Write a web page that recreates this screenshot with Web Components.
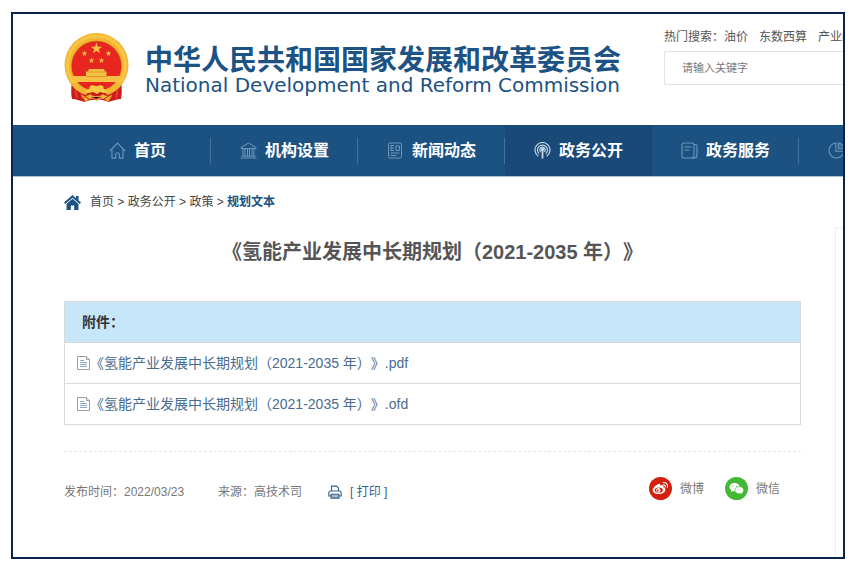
<!DOCTYPE html>
<html lang="zh-CN">
<head>
<meta charset="utf-8">
<meta name="viewport" content="width=device-width, initial-scale=1">
<title>《氢能产业发展中长期规划（2021-2035 年）》</title>
<style>
    body {
        margin: 0;
        background: #fff;
        color: #666;
        font: 12px/20px "Liberation Sans", "Noto Sans CJK SC", sans-serif;
        text-spacing-trim: space-all;
    }
</style>
</head>
<body>
<page-frame>
    <site-header></site-header>
    <site-nav>
        <nav-item icon="home">首页</nav-item>
        <nav-item icon="bank">机构设置</nav-item>
        <nav-item icon="news">新闻动态</nav-item>
        <nav-item icon="signal" active>政务公开</nav-item>
        <nav-item icon="doc">政务服务</nav-item>
        <nav-item icon="pie" label="互动交流"></nav-item>
    </site-nav>
    <article-layout>
        <bread-crumb slot="path"></bread-crumb>
        <h1 slot="title">《氢能产业发展中长期规划（2021-2035 年）》</h1>
        <attachment-list>
            <span slot="heading">附件：</span>
            <attachment-item href="#pdf">《氢能产业发展中长期规划（2021-2035 年）》.pdf</attachment-item>
            <attachment-item href="#ofd">《氢能产业发展中长期规划（2021-2035 年）》.ofd</attachment-item>
        </attachment-list>
        <article-meta></article-meta>
    </article-layout>
</page-frame>

<script>
const ICONS = {
    home: `<svg viewBox="0 0 17 17" fill="none" stroke="currentColor" stroke-width="1.1"><path d="M.7 9.2 8.5 1l7.8 8.2M3 7.5v8.6h3.7v-3.6a1.8 1.8 0 0 1 3.6 0v3.6H14V7.5"/></svg>`,
    bank: `<svg viewBox="0 0 17 17" fill="none" stroke="currentColor" stroke-width="1"><path d="M1 5.5 8.5 1 16 5.5v1H1zM.5 16h16M1.5 14.2h14M3 7v7M5 7v7M7.5 7v7M9.5 7v7M12 7v7M14 7v7"/></svg>`,
    news: `<svg viewBox="0 0 17 17" fill="none" stroke="currentColor" stroke-width="1"><rect x="1.500" y="1" width="13" height="15" rx="1.5"/><path d="M3.500 3.500h3.500M3.500 6h3.500M3.500 8.500h3.500M3.500 11h9M3.500 13.500h6M9 4h3.500v4.500H9zM4 3.500v5"/></svg>`,
    signal: `<svg viewBox="0 0 17 17" fill="none" stroke="currentColor" stroke-width="1.2"><path d="M4.300 14.200a7.500 7.500 0 1 1 8.400 0M5.200 11.800a5 5 0 1 1 6.600 0M6.700 9.800a2.700 2.700 0 1 1 3.600 0"/><path d="M8.500 7v9.500" stroke-width="1.800"/><circle cx="8.500" cy="7.500" r="1.200" fill="currentColor"/></svg>`,
    doc: `<svg viewBox="0 0 17 17" fill="none" stroke="currentColor" stroke-width="1.1"><rect x="1" y="1" width="12" height="15" rx="2"/><path d="M3.5 5h7M3.5 8h5M13 2.5h1.2A1.8 1.8 0 0 1 16 4.3V13a3 3 0 0 1-3 3h-2"/></svg>`,
    pie: `<svg viewBox="0 0 17 17" fill="none" stroke="currentColor" stroke-width="1.1"><path d="M7.8 1A7.5 7.5 0 1 0 16 9.2H7.8z"/><path d="M10.3 1v5.8h6A6 6 0 0 0 10.3 1z" fill="currentColor" fill-opacity=".4"/></svg>`,
    house: `<svg viewBox="0 0 16 14" fill="currentColor"><path d="M8 0 0 7l1.200 1.500L8 2.600l6.800 5.900L16 7l-2.300-2V.8h-2.400v2.100z"/><path d="M8 3.400 2.400 8.300V14h4V9.800h3.200V14h4V8.300z"/></svg>`,
    file: `<svg viewBox="0 0 13 14" fill="none"><path d="M.5.500h9l3 3v10H.5z" fill="#fff" stroke="#9a9ea4"/><path d="M9.500.500v3h3" fill="#e3e6ea" stroke="#9a9ea4"/><path d="M3 4.500h4M3 6.500h7M3 8.500h7M3 10.500h7" stroke="#8aa6c4"/></svg>`,
    printer: `<svg viewBox="0 0 14 14" fill="none" stroke="currentColor" stroke-width="1.1"><path d="M3.5 6V1.1h5L10.5 3v3M3 11H.8V7.4L2 6h10l1.2 1.4V11H11"/><path d="M3 9.2h8v3.9H3z" fill="currentColor" fill-opacity=".45"/></svg>`,
    weibo: `<svg viewBox="0 0 24 24"><circle cx="12" cy="12" r="12" fill="#d3200f"/><path d="M10.2 7.2c1.2-.3 1.9.4 1.6 1.8 2-.7 3.8-.3 3.3 1.6 1.3.3 2 1.2 2 2.4 0 2.8-3.2 4.8-6.8 4.8-3.5 0-6.4-1.6-6.4-4.2 0-2.3 3.5-5.8 6.3-6.4z" fill="#fff"/><ellipse cx="10.200" cy="13.600" rx="4.300" ry="2.700" fill="#d3200f"/><circle cx="9.700" cy="13.700" r="2.200" fill="#fff"/><circle cx="9.200" cy="14" r="1" fill="#d3200f"/><path d="M14.8 8.2c1.6-.3 2.5.8 2.1 2.2M14.7 5.8c3.1-.6 5.4 2.1 4.4 5" fill="none" stroke="#fff" stroke-width="1.1" stroke-linecap="round"/></svg>`,
    wechat: `<svg viewBox="0 0 24 24"><circle cx="12" cy="12" r="12" fill="#43b834"/><path d="M10 6.2c-3 0-5.3 1.9-5.3 4.3 0 1.4.8 2.6 2 3.4l-.5 1.7 2-1c.6.2 1.2.2 1.8.2 2.9 0 5.3-1.9 5.3-4.3S12.900 6.200 10 6.200z" fill="#fff"/><path d="M14.900 10c-2.600 0-4.600 1.700-4.600 3.800s2 3.800 4.600 3.800l1.500-.2 1.700.9-.4-1.500c1.100-.7 1.800-1.800 1.800-3 0-2.100-2-3.800-4.600-3.800z" fill="#fff" stroke="#43b834" stroke-width=".7"/><g fill="#43b834"><circle cx="8.200" cy="9.400" r=".6"/><circle cx="11.800" cy="9.400" r=".6"/><circle cx="13.400" cy="13" r=".5"/><circle cx="16.400" cy="13" r=".5"/></g></svg>`,
    emblem: `<svg viewBox="0 0 65 69">
        <defs><polygon id="star" points="0,-1 .24,-.31 .95,-.31 .38,.12 .59,.81 0,.38 -.59,.81 -.38,.12 -.95,-.31 -.24,-.31"/></defs>
        <path d="M8 48C7 55 7 62 8 66c5 0 8 2 13 3 3-3 20-3 23 0 5-1 8-3 13-3 1-5 1-11 0-18z" fill="#c91b1b"/>
        <path d="M12 50c-1 6 0 11 1 15M18 54c-1 5-1 8 1 12M53 50c1 6 0 11-1 15M47 54c1 5 1 8-1 12" stroke="#ec3a2d" stroke-width="2" fill="none"/>
        <circle cx="32.500" cy="32" r="32" fill="#f2b630"/>
        <circle cx="32.500" cy="32" r="29" fill="none" stroke="#f8c544" stroke-width="3"/>
        <circle cx="32.500" cy="33" r="25.500" fill="#d58e22"/>
        <circle cx="32.500" cy="33" r="24.800" fill="#e7271f"/>
        <g fill="#f5c044">
            <use href="#star" transform="translate(32.500 15.500) scale(6)"/>
            <use href="#star" transform="translate(20.500 20.500) scale(3)"/>
            <use href="#star" transform="translate(44.500 20.500) scale(3)"/>
            <use href="#star" transform="translate(27.500 27.500) scale(3)"/>
            <use href="#star" transform="translate(37.500 27.500) scale(3)"/>
            <path d="M25 36h15l1 2.500h1.500V43H57l-2 6H10l-2-6h14v-4.500h2z"/>
        </g>
        <path d="M24 39h17M22 43.500h21" stroke="#dc8b20" stroke-width=".8"/>
        <path d="M11 50c4 3 8 5 14 7l-3 4C15 59 9 55 7 50zm43 0c-4 3-8 5-14 7l3 4c7-2 13-6 15-11z" fill="#f2b630"/>
        <path d="M15 51l10 1-3 3zM50 51l-10 1 3 3z" fill="#e7271f"/>
        <path d="M22 61c5-4 16-4 21 0l-4 4H26z" fill="#c91b1b"/>
        <path d="M26 53l3-1 2 1h3l2-1 3 1 1 3 5 3-5 1-4-1-3 2-4-2-4 1-5-1 5-3z" fill="#f9c845"/>
        <path d="M17 62c4 2 7 1 9-1 3 3 10 3 13 0 2 2 5 3 9 1l-4 7c-2-3-5-4-8-3l-3 2-3-2c-4-1-6 0-8 3z" fill="#efb22e"/>
        <path d="M20 63l5 3M45 63l-5 3M28 64l4 2 5-2" stroke="#cc281e" stroke-width="1"/>
    </svg>`
};

class UiIcon extends HTMLElement {
    constructor() {
        super();
        this.attachShadow({ mode: 'open' });
        this.shadowRoot.innerHTML = `
            <style>
                :host { display: block; flex: none; width: 17px; height: 17px; }
                svg { display: block; width: 100%; height: 100%; }
            </style>
            ${ICONS[this.getAttribute('name')] || ''}
        `;
    }
}

class PageFrame extends HTMLElement {
    constructor() {
        super();
        this.attachShadow({ mode: 'open' });
        this.shadowRoot.innerHTML = `
            <style>
                :host {
                    display: flex;
                    flex-direction: column;
                    box-sizing: border-box;
                    min-height: calc(100vh - 18px);
                    margin: 12px 12px 6px 11px;
                    border: 2px solid #0a2250;
                    overflow: hidden;
                }
            </style>
            <slot></slot>
        `;
    }
}

class SiteHeader extends HTMLElement {
    constructor() {
        super();
        this.attachShadow({ mode: 'open' });
        this.shadowRoot.innerHTML = `
            <style>
                :host {
                    display: flex;
                    justify-content: space-between;
                    padding: 13px 0 23px 51px;
                }
                .logo {
                    display: flex;
                    gap: 16px;
                    padding-top: 6px;
                    color: #1c5284;
                    text-decoration: none;
                    white-space: nowrap;
                }
                .logo ui-icon { width: 65px; height: 69px; }
                .names { display: flex; flex-direction: column; padding-top: 14px; }
                .names b { font-size: 28px; line-height: 28px; }
                .names span { font: 20px/20px "DejaVu Sans", sans-serif; }
                .search { width: 179px; }
                .hot { display: flex; gap: 11px; white-space: nowrap; color: #555; }
                .hot a { color: inherit; text-decoration: none; }
                input {
                    box-sizing: border-box;
                    width: 100%;
                    height: 34px;
                    margin: 4px 0 0;
                    padding: 0 0 0 17px;
                    border: 1px solid #e2e2e2;
                    border-right: 0;
                    border-radius: 3px 0 0 3px;
                    font: inherit;
                    font-size: 11px;
                    outline: 0;
                }
                input::placeholder { color: #777; }
            </style>
            <a class="logo" href="#">
                <ui-icon name="emblem"></ui-icon>
                <div class="names">
                    <b>中华人民共和国国家发展和改革委员会</b>
                    <span>National Development and Reform Commission</span>
                </div>
            </a>
            <form class="search">
                <div class="hot">
                    <span>热门搜索：<a href="#">油价</a></span>
                    <a href="#">东数西算</a>
                    <a href="#">产业结构</a>
                </div>
                <input type="search" aria-label="搜索" placeholder="请输入关键字">
            </form>
        `;
    }
}

class SiteNav extends HTMLElement {
    constructor() {
        super();
        this.attachShadow({ mode: 'open' });
        this.shadowRoot.innerHTML = `
            <style>
                :host {
                    display: block;
                    background: #1b5282;
                    border-bottom: 1px solid #a9c2d8;
                }
                nav { display: flex; padding-left: 51px; }
            </style>
            <nav><slot></slot></nav>
        `;
    }
}

class NavItem extends HTMLElement {
    constructor() {
        super();
        this.attachShadow({ mode: 'open' });
        const label = this.getAttribute('label');
        this.shadowRoot.innerHTML = `
            <style>
                :host {
                    display: block;
                    flex: 0 0 147px;
                    background: linear-gradient(#40739d, #40739d) right center / 1px 26px no-repeat;
                }
                :host([active]) { background: #184977; }
                a {
                    display: flex;
                    align-items: center;
                    gap: 8px;
                    height: 51px;
                    padding: 0 29px;
                    color: #fff;
                    font-size: 16px;
                    font-weight: bold;
                    text-decoration: none;
                    white-space: nowrap;
                }
                :host(:first-child) a { justify-content: center; }
                ui-icon { color: #6e97ba; }
                :host([active]) ui-icon { color: #c3d5e5; }
            </style>
            <a href="#" ${label ? `aria-label="${label}"` : ''}>
                <ui-icon name="${this.getAttribute('icon')}"></ui-icon>
                <slot></slot>
            </a>
        `;
    }
}

class ArticleLayout extends HTMLElement {
    constructor() {
        super();
        this.attachShadow({ mode: 'open' });
        this.shadowRoot.innerHTML = `
            <style>
                :host {
                    display: grid;
                    flex: 1;
                    grid-template-columns: minmax(0, 1fr) 8px;
                    grid-template-rows: auto 1fr;
                    column-gap: 34px;
                    padding: 15px 0 0 51px;
                }
                .path { grid-column: 1 / 3; padding-bottom: 15px; }
                ::slotted(h1) {
                    margin: 9px 0 33px;
                    color: #555;
                    font-size: 20px;
                    line-height: 32px;
                    text-align: center;
                }
                aside {
                    border: 1px solid #eee;
                    border-width: 1px 0 0 1px;
                }
            </style>
            <div class="path"><slot name="path"></slot></div>
            <main>
                <slot name="title"></slot>
                <slot></slot>
            </main>
            <aside></aside>
        `;
    }
}

class BreadCrumb extends HTMLElement {
    constructor() {
        super();
        this.attachShadow({ mode: 'open' });
        this.shadowRoot.innerHTML = `
            <style>
                :host { display: flex; align-items: center; gap: 9px; color: #444; }
                ui-icon { width: 17px; height: 15px; color: #1b5282; }
                a { color: inherit; text-decoration: none; }
                b { color: #1b5282; }
            </style>
            <ui-icon name="house"></ui-icon>
            <nav><a href="#">首页</a> &gt; <a href="#">政务公开</a> &gt; <a href="#">政策</a> &gt; <b>规划文本</b></nav>
        `;
    }
}

class AttachmentList extends HTMLElement {
    constructor() {
        super();
        this.attachShadow({ mode: 'open' });
        this.shadowRoot.innerHTML = `
            <style>
                :host {
                    display: block;
                    border: 1px solid #d9d9d9;
                    font-size: 14px;
                }
                h2 {
                    margin: 0;
                    padding: 0 17px;
                    background: #c7e6fa;
                    color: #333;
                    font-size: 14px;
                    line-height: 40px;
                }
            </style>
            <h2><slot name="heading"></slot></h2>
            <div role="list"><slot></slot></div>
        `;
    }
}

class AttachmentItem extends HTMLElement {
    constructor() {
        super();
        this.attachShadow({ mode: 'open' });
        this.setAttribute('role', 'listitem');
        this.shadowRoot.innerHTML = `
            <style>
                :host { display: block; border-top: 1px solid #d9d9d9; }
                a {
                    display: flex;
                    align-items: center;
                    padding: 0 12px;
                    color: #486b90;
                    line-height: 40px;
                    text-decoration: none;
                }
                ui-icon { width: 13px; height: 14px; }
            </style>
            <a href="${this.getAttribute('href')}"><ui-icon name="file"></ui-icon><slot></slot></a>
        `;
    }
}

class ArticleMeta extends HTMLElement {
    constructor() {
        super();
        this.attachShadow({ mode: 'open' });
        this.shadowRoot.innerHTML = `
            <style>
                :host {
                    display: flex;
                    justify-content: space-between;
                    margin-top: 26px;
                    padding: 25px 21px 0 0;
                    border-top: 1px dashed #e6e6e6;
                    color: #777;
                    white-space: nowrap;
                }
                .info, .share, button, .share a { display: flex; align-items: center; }
                .info { gap: 34px; padding-top: 5px; }
                .source { display: flex; gap: 26px; }
                button {
                    gap: 8px;
                    padding: 0;
                    border: 0;
                    background: none;
                    color: #35618c;
                    font: inherit;
                }
                button ui-icon { width: 14px; height: 14px; }
                .share { gap: 21px; align-self: flex-start; }
                .share a { gap: 8px; color: inherit; text-decoration: none; }
                .share ui-icon { width: 23px; height: 23px; }
            </style>
            <div class="info">
                <span>发布时间：2022/03/23</span>
                <div class="source">
                    <span>来源：高技术司</span>
                    <button type="button"><ui-icon name="printer"></ui-icon>[ 打印 ]</button>
                </div>
            </div>
            <div class="share">
                <a href="#"><ui-icon name="weibo"></ui-icon>微博</a>
                <a href="#"><ui-icon name="wechat"></ui-icon>微信</a>
            </div>
        `;
    }
}

customElements.define('ui-icon', UiIcon);
customElements.define('page-frame', PageFrame);
customElements.define('site-header', SiteHeader);
customElements.define('site-nav', SiteNav);
customElements.define('nav-item', NavItem);
customElements.define('article-layout', ArticleLayout);
customElements.define('bread-crumb', BreadCrumb);
customElements.define('attachment-list', AttachmentList);
customElements.define('attachment-item', AttachmentItem);
customElements.define('article-meta', ArticleMeta);
</script>
</body>
</html>
